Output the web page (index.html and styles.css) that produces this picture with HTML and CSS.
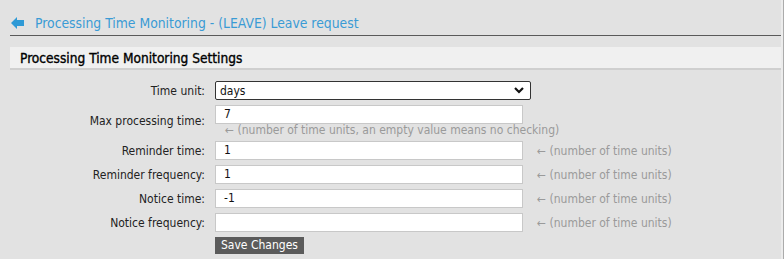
FILE: index.html
```html
<!DOCTYPE html>
<html>
<head>
<meta charset="utf-8">
<link rel="stylesheet" href="styles.css">
</head>
<body>
<div class="page">
  <header class="topbar">
    <svg class="back" width="13" height="12" viewBox="0 0 13 12"><path d="M0 6 L6 0 L6 3 L13 3 L13 9 L6 9 L6 12 Z" fill="#2f9ad6"/></svg>
    <span class="title">Processing Time Monitoring - (LEAVE) Leave request</span>
  </header>
  <div class="section-head">Processing Time Monitoring Settings</div>
  <form class="form">
    <label class="lbl">Time unit:</label>
    <div class="ctrl wide">
      <div class="select"><span>days</span>
        <svg width="10" height="7" viewBox="0 0 10 7"><path d="M1 1 L5 5 L9 1" fill="none" stroke="#111" stroke-width="2.2"/></svg>
      </div>
    </div>

    <label class="lbl">Max processing time:</label>
    <div class="ctrl wide stack">
      <div class="input">7</div>
      <div class="note">&larr; (number of time units, an empty value means no checking)</div>
    </div>

    <label class="lbl">Reminder time:</label>
    <div class="ctrl"><div class="input">1</div></div>
    <div class="hint">&larr; (number of time units)</div>

    <label class="lbl">Reminder frequency:</label>
    <div class="ctrl"><div class="input">1</div></div>
    <div class="hint">&larr; (number of time units)</div>

    <label class="lbl">Notice time:</label>
    <div class="ctrl"><div class="input">-1</div></div>
    <div class="hint">&larr; (number of time units)</div>

    <label class="lbl">Notice frequency:</label>
    <div class="ctrl"><div class="input"></div></div>
    <div class="hint">&larr; (number of time units)</div>

    <div class="ctrl btnrow"><button type="button" class="save">Save Changes</button></div>
  </form>
</div>
</body>
</html>
```

FILE: styles.css
```css
html, body {
  margin: 0;
  padding: 0;
  background: #e2e2e2;
}
body {
  border-right: 1px solid #ababab;
  height: 259px;
  box-sizing: border-box;
  font-family: "DejaVu Sans Condensed", "DejaVu Sans", sans-serif;
  color: #222;
}
.page {
  border-right: 2px solid #ececec;
  height: 100%;
  box-sizing: border-box;
  padding-left: 10px;
}
.topbar {
  height: 36px;
  border-bottom: 1px solid #5a5a5a;
  display: flex;
  align-items: center;
  padding-top: 10px;
  box-sizing: border-box;
}
.back {
  margin-left: 1px;
  margin-right: 11px;
}
.title {
  color: #3a9bd5;
  font-size: 13.8px;
}
.section-head {
  margin-top: 11px;
  height: 23px;
  background: #f0f0f0;
  border-bottom: 2px solid #cfcfcf;
  box-sizing: border-box;
  padding-left: 10px;
  font-size: 13.6px;
  color: #000;
  -webkit-text-stroke: 0.35px #000;
  line-height: 22px;
}
.form {
  display: grid;
  grid-template-columns: 195px 308px auto;
  column-gap: 10px;
  row-gap: 5px;
  margin-top: 11px;
  font-size: 12px;
}
.lbl {
  grid-column: 1;
  text-align: right;
  align-self: center;
  color: #222;
}
.ctrl { grid-column: 2; }
.ctrl.wide { grid-column: 2 / 4; }
.stack {
  display: flex;
  flex-direction: column;
  align-items: flex-start;
}
.select {
  width: 316px;
  height: 19px;
  box-sizing: border-box;
  border: 1px solid #333;
  border-radius: 2px;
  background: #fff;
  display: flex;
  align-items: center;
  justify-content: space-between;
  padding: 0 6px 0 4px;
  color: #111;
}
.input {
  width: 308px;
  height: 19px;
  box-sizing: border-box;
  border: 1px solid #c8c8c8;
  background: #fff;
  padding-left: 8px;
  line-height: 17px;
  color: #111;
}
.hint {
  grid-column: 3;
  align-self: center;
  color: #9a9a9a;
  padding-left: 4px;
}
.note {
  color: #9a9a9a;
  padding-left: 10px;
  line-height: 12px;
  height: 12px;
}
.btnrow { grid-column: 2; }
.save {
  height: 17px;
  padding: 0 6px;
  border: 0;
  background: #5b5b5b;
  color: #fff;
  font-family: inherit;
  font-size: 12px;
  line-height: 17px;
}
```
